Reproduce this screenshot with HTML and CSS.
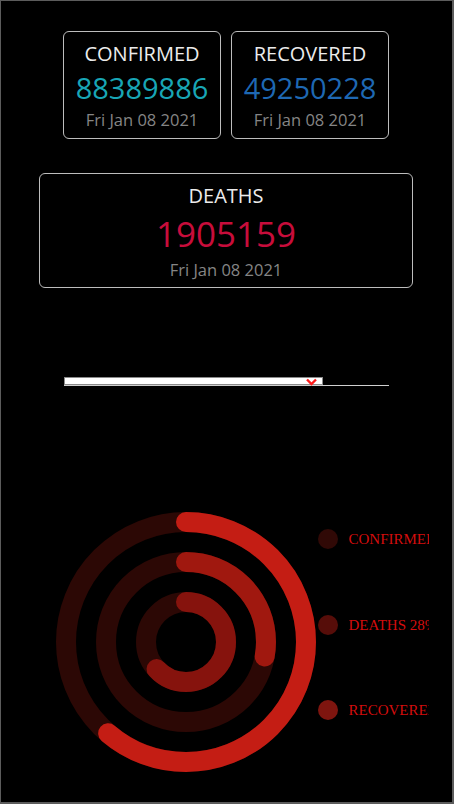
FILE: index.html
```html
<!DOCTYPE html>
<html lang="en">
<head>
<meta charset="utf-8">
<title>Covid Tracker</title>
<link rel="stylesheet" href="styles.css">
</head>
<body>
<div class="frame">
  <div class="cards">
    <div class="card small">
      <div class="title">CONFIRMED</div>
      <div class="num confirmed">88389886</div>
      <div class="date">Fri Jan 08 2021</div>
    </div>
    <div class="card small">
      <div class="title">RECOVERED</div>
      <div class="num recovered">49250228</div>
      <div class="date">Fri Jan 08 2021</div>
    </div>
  </div>
  <div class="card wide">
    <div class="title">DEATHS</div>
    <div class="num big deaths">1905159</div>
    <div class="date">Fri Jan 08 2021</div>
  </div>

  <div class="select-wrap">
    <div class="select">
      <svg class="chev" width="11" height="8" viewBox="0 0 11 8"><path d="M1 1.5 L5.5 6 L10 1.5" fill="none" stroke="#ff1a1a" stroke-width="2.4"/></svg>
    </div>
    <div class="underline"></div>
  </div>

  <div class="chart">
    <svg class="rings" width="260" height="260" viewBox="0 0 260 260">
      <g fill="none" stroke-width="20">
        <circle cx="130" cy="130" r="120" stroke="#2c0805"/>
        <circle cx="130" cy="130" r="80" stroke="#2c0805"/>
        <circle cx="130" cy="130" r="40" stroke="#2c0805"/>
        <g transform="rotate(-90 130 130)" stroke-linecap="round">
          <circle cx="130" cy="130" r="120" stroke="#c41d14" stroke-dasharray="461.5 1000"/>
          <circle cx="130" cy="130" r="80" stroke="#a0180f" stroke-dasharray="140 1000"/>
          <circle cx="130" cy="130" r="40" stroke="#86130d" stroke-dasharray="158.5 1000"/>
        </g>
      </g>
    </svg>
    <div class="legend">
      <div class="item"><span class="dot d1"></span><span class="ltext">CONFIRMED 61%</span></div>
      <div class="item"><span class="dot d2"></span><span class="ltext">DEATHS 28%</span></div>
      <div class="item"><span class="dot d3"></span><span class="ltext">RECOVERED 63%</span></div>
    </div>
  </div>
</div>
</body>
</html>
```
FILE: styles.css
```css
* { box-sizing: border-box; }
html, body { margin: 0; padding: 0; background: #000; }
.frame {
  width: 454px;
  height: 804px;
  border-style: solid;
  border-color: #5c5c5c;
  border-width: 1px 2px 2px 1px;
  background: #000;
  padding-top: 30px;
  font-family: "Open Sans", "Noto Sans", sans-serif;
  overflow: hidden;
}
.cards {
  display: flex;
  justify-content: center;
  gap: 10px;
  padding-right: 1px;
}
.card {
  border: 1px solid #bdbdbd;
  border-radius: 6px;
  display: flex;
  flex-direction: column;
  align-items: center;
  text-align: center;
}
.card.small {
  width: 158px;
  height: 108px;
  padding-top: 10px;
}
.card.wide {
  width: 374px;
  height: 115px;
  margin: 34px 0 0 38px;
  padding-top: 10px;
}
.title {
  font-size: 20px;
  line-height: 24px;
  color: #ececec;
}
.num {
  font-size: 29px;
  line-height: 44px;
}
.num.big {
  font-size: 35px;
  line-height: 52px;
}
.confirmed { color: #18a6b6; }
.recovered { color: #1e68b3; }
.deaths { color: #c80d3b; }
.date {
  font-size: 16.5px;
  line-height: 20px;
  color: #858585;
}
.select-wrap {
  margin-top: 89px;
  margin-left: 63px;
  width: 325px;
}
.select {
  width: 259px;
  height: 8px;
  background: #fff;
  border: 1px solid #8a8a8a;
  display: flex;
  justify-content: flex-end;
  align-items: flex-start;
  padding-right: 5px;
}
.chev {
  display: block;
  overflow: visible;
}
.underline {
  height: 1px;
  background: #d0d0d0;
}
.chart {
  margin-top: 126px;
  padding-left: 55px;
  display: flex;
  align-items: flex-start;
}
.rings { display: block; flex: none; }
.legend {
  margin-left: 2px;
  padding-top: 17px;
  display: flex;
  flex-direction: column;
  gap: 65.5px;
}
.item {
  display: flex;
  align-items: center;
  height: 20px;
  gap: 10.5px;
}
.dot {
  width: 20px;
  height: 20px;
  border-radius: 50%;
  flex: none;
}
.d1 { background: #300906; }
.d2 { background: #560d09; }
.d3 { background: #7e150f; }
.ltext {
  width: 80px;
  overflow: hidden;
  white-space: nowrap;
  font-family: "Liberation Serif", "Times New Roman", serif;
  font-size: 15px;
  line-height: 20px;
  color: #d40d0d;
}
```
